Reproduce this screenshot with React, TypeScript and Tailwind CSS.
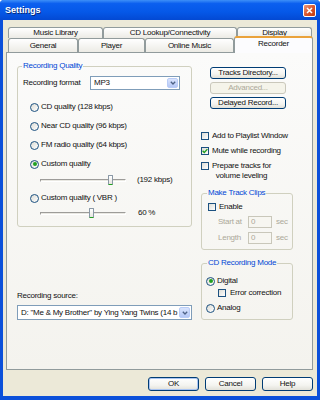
import React from 'react';

const Radio = ({ checked = false }: { checked?: boolean }) => (
  <span className="w-[9px] h-[9px] shrink-0 rounded-full border border-[#1c5180] bg-[linear-gradient(135deg,#dcdcd5,#ffffff)] flex items-center justify-center">
    {checked && <span className="w-[4px] h-[4px] rounded-full bg-[#21a121]" />}
  </span>
);

const Check = ({ checked = false }: { checked?: boolean }) => (
  <span className="w-[8px] h-[8px] shrink-0 border border-[#1c5180] bg-[linear-gradient(135deg,#dcdcd5,#ffffff)] flex items-center justify-center">
    {checked && (
      <svg width="6" height="6" viewBox="0 0 6 6">
        <path d="M0.6 2.8 L2.3 4.5 L5.4 1.1" stroke="#21a121" strokeWidth="1.4" fill="none" />
      </svg>
    )}
  </span>
);

const Arrow = () => (
  <span className="w-[11px] h-full shrink-0 rounded-[2px] border border-[#b9ccf7] bg-[linear-gradient(#d9e4fd,#b5c8f6)] flex items-center justify-center">
    <svg width="6" height="4" viewBox="0 0 6 4">
      <path d="M0.8 0.8 L3 3 L5.2 0.8" stroke="#4d6185" strokeWidth="1.3" fill="none" />
    </svg>
  </span>
);

const XpButton = ({ label, disabled = false, w }: any) => (
  <div
    className={`${w} h-[12px] rounded-[3px] border flex items-center justify-center ${
      disabled
        ? 'border-[#cac8bb] bg-[#f5f4ea] text-[#aca899]'
        : 'border-[#003c74] bg-[linear-gradient(#ffffff,#f4f4f0_60%,#e2e1d9)]'
    }`}
  >
    {label}
  </div>
);

const Slider = ({ thumb }: { thumb: string }) => (
  <div className="relative w-[86px] h-[10px] flex items-center">
    <div className="w-full h-[3px] border border-t-[#9d9c99] border-l-[#9d9c99] border-b-white border-r-white bg-[#e9e8e2]" />
    <span className={`absolute top-[0px] ${thumb} w-[5px] h-[10px] rounded-[1px] border border-[#8a98a6] border-b-[#21a121] bg-[linear-gradient(#ffffff,#e6e5df)]`} />
  </div>
);

const Tab = ({ label, w }: { label: string; w: string }) => (
  <div className={`${w} h-full border border-b-0 border-[#919b9c] rounded-t-[3px] bg-[linear-gradient(#ffffff,#ecebe5)] flex items-center justify-center`}>
    {label}
  </div>
);

const Legend = ({ children, ml }: any) => (
  <legend className={`${ml} px-[1px] text-[#0046d5] leading-[10px]`}>{children}</legend>
);

export default function App() {
  return (
    <div className="w-[320px] h-[400px] flex flex-col bg-[#0b50da] rounded-t-[4px] font-['Liberation_Sans',Arial,sans-serif] text-[8px] tracking-[-0.25px] leading-[10px] text-[#111]">
      <div className="h-[20px] shrink-0 flex items-center pl-[5px] pr-[4px] rounded-t-[4px] bg-[linear-gradient(#3d8ff8,#0b5fef_18%,#0558e8_60%,#0349d3)]">
        <span className="flex-1 text-white font-bold text-[9px] tracking-normal [text-shadow:1px_1px_0_#0a2b7a]">Settings</span>
        <div className="w-[13px] h-[13px] rounded-[2px] border border-white bg-[linear-gradient(135deg,#ee9c7e,#d9522a_55%,#c13d12)] flex items-center justify-center">
          <svg width="7" height="7" viewBox="0 0 7 7">
            <path d="M1 1 L6 6 M6 1 L1 6" stroke="#fff" strokeWidth="1.5" />
          </svg>
        </div>
      </div>

      <div className="flex-1 mx-[3px] mb-[4px] bg-[#ece9d8] flex flex-col px-[3px] pt-[7px]">
        <div className="flex ml-[2px] h-[11px]">
          <Tab label="Music Library" w="w-[95px]" />
          <Tab label="CD Lookup/Connectivity" w="w-[134px]" />
          <Tab label="Display" w="w-[75px]" />
        </div>
        <div className="flex ml-[2px] h-[14px] items-end">
          <Tab label="General" w="w-[70px]" />
          <Tab label="Player" w="w-[67px]" />
          <Tab label="Online Music" w="w-[89px]" />
          <div className="relative z-10 w-[79px] h-[17px] mb-[-1px] border border-b-0 border-[#919b9c] border-t-[2px] border-t-[#eaa23a] rounded-t-[3px] bg-[#fcfcfe] flex justify-center pt-[1px]">
            Recorder
          </div>
        </div>

        <div className="h-[318px] w-[307px] border border-[#919b9c] bg-[linear-gradient(#fbfbfa,#f4f3ee)] flex pl-[10px]">
          <div className="w-[175px] flex flex-col pt-[8px]">
            <fieldset className="w-[175px] rounded-[3px] border border-[#d0d0bf] pb-[8px]">
              <Legend ml="ml-[4px]">Recording Quality</Legend>
              <div className="mt-[5px] h-[14px] flex items-center pl-[5px]">
                <span className="w-[67px]">Recording format</span>
                <div className="w-[90px] h-[14px] border border-[#7f9db9] bg-white flex items-center pl-[3px] pr-[1px] py-[1px]">
                  <span className="flex-1">MP3</span>
                  <Arrow />
                </div>
              </div>
              <div className="mt-[12px] h-[10px] flex items-center pl-[12px] gap-[2px]">
                <Radio />
                <span>CD quality (128 kbps)</span>
              </div>
              <div className="mt-[9px] h-[10px] flex items-center pl-[12px] gap-[2px]">
                <Radio />
                <span>Near CD quality (96 kbps)</span>
              </div>
              <div className="mt-[9px] h-[10px] flex items-center pl-[12px] gap-[2px]">
                <Radio />
                <span>FM radio quality (64 kbps)</span>
              </div>
              <div className="mt-[9px] h-[10px] flex items-center pl-[12px] gap-[2px]">
                <Radio checked />
                <span>Custom quality</span>
              </div>
              <div className="mt-[6px] h-[10px] flex items-center pl-[22px]">
                <Slider thumb="left-[68px]" />
                <span className="ml-[11px]">(192 kbps)</span>
              </div>
              <div className="mt-[8px] h-[10px] flex items-center pl-[12px] gap-[2px]">
                <Radio />
                <span>Custom quality ( VBR )</span>
              </div>
              <div className="mt-[5px] h-[10px] flex items-center pl-[22px]">
                <Slider thumb="left-[49px]" />
                <span className="ml-[12px]">60 %</span>
              </div>
            </fieldset>

            <div className="mt-[64px]">Recording source:</div>
            <div className="mt-[4px] w-[175px] h-[15px] border border-[#7f9db9] bg-white flex items-center pl-[3px] pr-[1px] py-[1px]">
              <span className="flex-1 overflow-hidden whitespace-nowrap">D: "Me &amp; My Brother" by Ying Yang Twins (14 b</span>
              <Arrow />
            </div>
          </div>

          <div className="w-[92px] ml-[9px] flex flex-col pt-[14px]">
            <div className="ml-[9px] flex flex-col gap-[3px]">
              <XpButton label="Tracks Directory..." w="w-[76px]" />
              <XpButton label="Advanced..." w="w-[76px]" disabled />
              <XpButton label="Delayed Record..." w="w-[76px]" />
            </div>

            <div className="mt-[22px] flex flex-col gap-[5px]">
              <div className="flex items-start gap-[3px]">
                <span className="mt-[1px]"><Check /></span>
                <span>Add to Playlist Window</span>
              </div>
              <div className="flex items-start gap-[3px]">
                <span className="mt-[1px]"><Check checked /></span>
                <span>Mute while recording</span>
              </div>
              <div className="flex items-start gap-[3px]">
                <span className="mt-[1px]"><Check /></span>
                <span className="text-center">Prepare tracks for<br />volume leveling</span>
              </div>
            </div>

            <fieldset className="mt-[7px] w-[92px] rounded-[3px] border border-[#d0d0bf] pb-[5px]">
              <Legend ml="ml-[5px]">Make Track Clips</Legend>
              <div className="mt-[4px] h-[10px] flex items-center pl-[6px] gap-[3px]">
                <Check />
                <span>Enable</span>
              </div>
              <div className="mt-[4px] h-[12px] flex items-center pl-[16px] text-[#aca899]">
                <span className="w-[30px]">Start at</span>
                <span className="w-[24px] h-[12px] border border-[#c9c7ba] bg-[#f7f6f1] pl-[2px] flex items-center">0</span>
                <span className="ml-[4px]">sec</span>
              </div>
              <div className="mt-[4px] h-[12px] flex items-center pl-[16px] text-[#aca899]">
                <span className="w-[30px]">Length</span>
                <span className="w-[24px] h-[12px] border border-[#c9c7ba] bg-[#f7f6f1] pl-[2px] flex items-center">0</span>
                <span className="ml-[4px]">sec</span>
              </div>
            </fieldset>

            <fieldset className="mt-[8px] w-[92px] rounded-[3px] border border-[#d0d0bf] pb-[6px]">
              <Legend ml="ml-[5px]">CD Recording Mode</Legend>
              <div className="mt-[8px] h-[10px] flex items-center pl-[4px] gap-[2px]">
                <Radio checked />
                <span>Digital</span>
              </div>
              <div className="mt-[2px] h-[10px] flex items-center pl-[16px] gap-[4px]">
                <Check />
                <span>Error correction</span>
              </div>
              <div className="mt-[5px] h-[10px] flex items-center pl-[4px] gap-[2px]">
                <Radio />
                <span>Analog</span>
              </div>
            </fieldset>
          </div>
        </div>

        <div className="mt-[7px] flex justify-end gap-[6px] pr-[1px]">
          <div className="w-[51px] h-[14px] rounded-[3px] border border-[#003c74] bg-[linear-gradient(#ffffff,#f4f4f0_60%,#e2e1d9)] shadow-[inset_0_0_0_1px_#a9c4f2] flex items-center justify-center">OK</div>
          <div className="w-[51px] h-[14px] rounded-[3px] border border-[#003c74] bg-[linear-gradient(#ffffff,#f4f4f0_60%,#e2e1d9)] flex items-center justify-center">Cancel</div>
          <div className="w-[51px] h-[14px] rounded-[3px] border border-[#003c74] bg-[linear-gradient(#ffffff,#f4f4f0_60%,#e2e1d9)] flex items-center justify-center">Help</div>
        </div>
      </div>
    </div>
  );
}
